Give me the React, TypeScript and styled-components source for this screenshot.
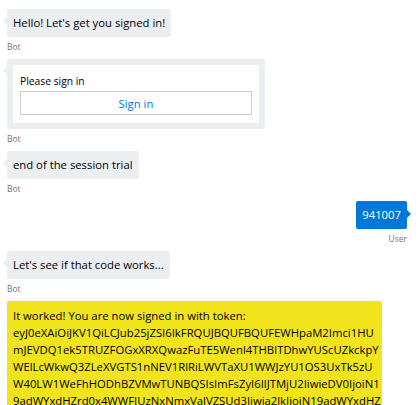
import React from "react";
import styled, { createGlobalStyle } from "styled-components";

const Global = createGlobalStyle`
  html, body { margin: 0; padding: 0; background: #ffffff; }
  body { font-family: "Open Sans", "Noto Sans", sans-serif; color: #000; }
`;

const Page = styled.div`
  width: 420px;
  height: 405px;
  overflow: hidden;
  box-sizing: border-box;
  padding: 9px 13px 0 7px;
  display: flex;
  flex-direction: column;
`;

const Group = styled.div<{ $user?: boolean }>`
  display: flex;
  flex-direction: column;
  align-items: ${(p) => (p.$user ? "flex-end" : "flex-start")};
`;

const Bubble = styled.div<{ $variant?: "bot" | "user" | "yellow" }>`
  position: relative;
  box-sizing: border-box;
  font-size: 11.3px;
  line-height: 20px;
  padding: 4px 6px;
  border-radius: 2px;
  background: ${(p) =>
    p.$variant === "user" ? "#0078d7" : p.$variant === "yellow" ? "#f2e41c" : "#eceff1"};
  color: ${(p) => (p.$variant === "user" ? "#ffffff" : "#000000")};
  &::before {
    content: "";
    position: absolute;
    top: ${(p) => (p.$variant === "user" ? "9px" : "8px")};
    ${(p) => (p.$variant === "user" ? "right: -4px;" : "left: -4px;")}
    border-top: 4px solid transparent;
    border-bottom: 4px solid transparent;
    ${(p) =>
      p.$variant === "user"
        ? "border-left: 4px solid #0078d7;"
        : `border-right: 4px solid ${p.$variant === "yellow" ? "#f2e41c" : "#eceff1"};`}
  }
`;

const TokenBubble = styled(Bubble)`
  width: 375px;
  line-height: 17px;
  padding-top: 6px;
  white-space: nowrap;
  overflow: hidden;
`;

const Label = styled.div`
  font-size: 8.5px;
  line-height: 13px;
  color: #767676;
  margin: 3px 0 6px;
`;

const Card = styled.div`
  position: relative;
  width: 258px;
  box-sizing: border-box;
  padding: 6px;
  background: #eceff1;
  border-radius: 2px;
  &::before {
    content: "";
    position: absolute;
    top: 8px;
    left: -4px;
    border-top: 4px solid transparent;
    border-bottom: 4px solid transparent;
    border-right: 4px solid #eceff1;
  }
`;

const CardBody = styled.div`
  background: #ffffff;
  padding: 6px 7px 8px;
  display: flex;
  flex-direction: column;
`;

const CardTitle = styled.div`
  font-size: 10.3px;
  line-height: 20px;
`;

const SignInButton = styled.button`
  height: 24px;
  border: 1px solid #cccccc;
  background: #ffffff;
  color: #0078d7;
  font-family: inherit;
  font-size: 11.3px;
  padding: 0;
`;

const Line = styled.div``;

const tokenLines = [
  "It worked! You are now signed in with token:",
  "eyJ0eXAiOiJKV1QiLCJub25jZSI6IkFRQUJBQUFBQUFEWHpaM2Imci1HU",
  "mJEVDQ1ek5TRUZFOGxXRXQwazFuTE5Wenl4THBITDhwYUScUZkckpY",
  "WElLcWkwQ3ZLeXVGTS1nNEV1RlRiLWVTaXU1WWJzYU1OS3UxTk5zU",
  "W40LW1WeFhHODhBZVMwTUNBQSIsImFsZyI6IlJTMjU2IiwieDV0IjoiN1",
  "9adWYxdHZrd0x4WWFIUzNxNmxValVZSUd3Iiwia2lkIjoiN19adWYxdHZ",
  "rd0x4WWFIUzNxNmxValVZSUd3In0.eyJhdWQiOiIwMDAwMDAwMy0wMDAw",
];

export default function App() {
  return (
    <>
      <Global />
      <Page>
        <Group>
          <Bubble>Hello! Let's get you signed in!</Bubble>
          <Label>Bot</Label>
        </Group>
        <Group>
          <Card>
            <CardBody>
              <CardTitle>Please sign in</CardTitle>
              <SignInButton>Sign in</SignInButton>
            </CardBody>
          </Card>
          <Label>Bot</Label>
        </Group>
        <Group>
          <Bubble>end of the session trial</Bubble>
          <Label>Bot</Label>
        </Group>
        <Group $user>
          <Bubble $variant="user">941007</Bubble>
          <Label>User</Label>
        </Group>
        <Group>
          <Bubble>Let's see if that code works...</Bubble>
          <Label>Bot</Label>
        </Group>
        <Group>
          <TokenBubble $variant="yellow">
            {tokenLines.map((l, i) => (
              <Line key={i}>{l}</Line>
            ))}
          </TokenBubble>
        </Group>
      </Page>
    </>
  );
}
